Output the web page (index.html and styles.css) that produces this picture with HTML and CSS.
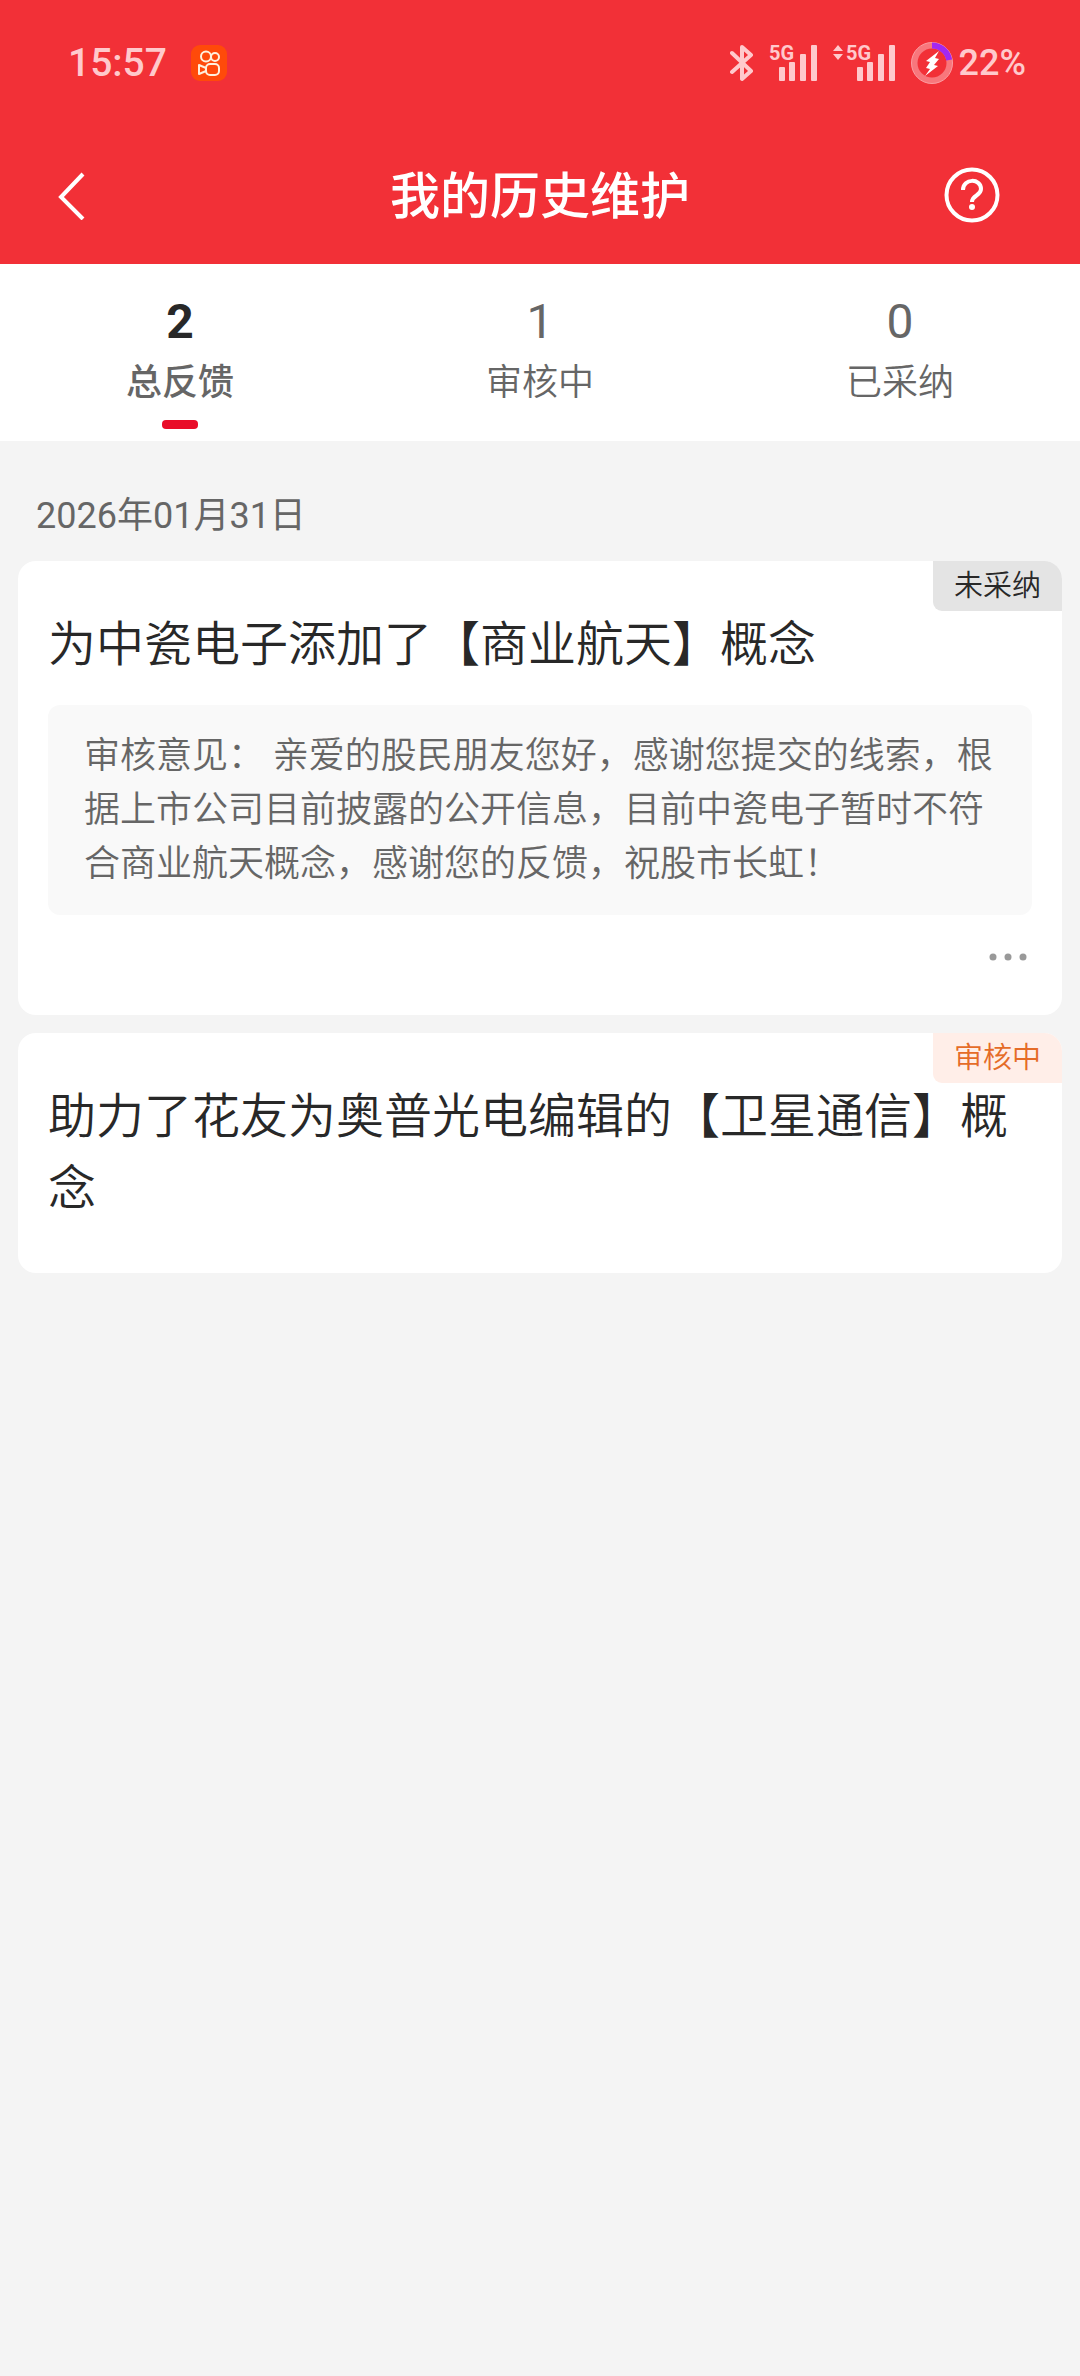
FILE: index.html
```html
<!DOCTYPE html>
<html lang="zh-CN">
<head>
<meta charset="utf-8">
<meta name="viewport" content="width=device-width, initial-scale=1">
<title>我的历史维护</title>
<link rel="stylesheet" href="styles.css">
</head>
<body>
<header class="header">
  <div class="status">
    <div class="status-left">
      <span class="time">15:57</span>
      <svg class="app-icon" width="36" height="36" viewBox="0 0 36 36" aria-hidden="true">
        <rect width="36" height="36" rx="9" fill="#ff4a0a"/>
        <g fill="none" stroke="#fff0dc" stroke-width="2" stroke-linejoin="round">
          <circle cx="15" cy="11.500" r="5"/>
          <circle cx="24" cy="12" r="4"/>
          <rect x="15" y="19" width="13" height="11" rx="4"/>
          <path d="M15 23 8 20v9l7-3"/>
        </g>
      </svg>
    </div>
    <div class="status-right">
      <svg width="24" height="38" viewBox="0 0 24 38" fill="none" stroke="currentColor" stroke-width="4" stroke-linejoin="round" stroke-linecap="round" aria-hidden="true">
        <path d="M2 9 21 27 12 35V3l9 8L2 28"/>
      </svg>
      <svg class="signal" width="49" height="54" viewBox="0 -8 49 54" fill="currentColor" role="img" aria-label="5G">
        <text class="net" x="0" y="16">5G</text>
        <rect x="10" y="23" width="6" height="14" rx="1"/><rect x="20" y="18" width="6" height="19" rx="1"/><rect x="31" y="10" width="6" height="27" rx="1"/><rect x="42" y="1" width="6" height="36" rx="1"/>
      </svg>
      <svg class="signal" width="63" height="54" viewBox="0 -8 63 54" fill="currentColor" role="img" aria-label="5G">
        <path d="M0 7 5 1l5 6zM0 10h10l-5 6z"/>
        <text class="net" x="13" y="16">5G</text>
        <rect x="24" y="23" width="6" height="14" rx="1"/><rect x="34" y="18" width="6" height="19" rx="1"/><rect x="45" y="10" width="6" height="27" rx="1"/><rect x="56" y="1" width="6" height="36" rx="1"/>
      </svg>
      <span class="battery">
        <svg width="42" height="42" viewBox="0 0 42 42" aria-hidden="true">
          <circle cx="21" cy="21" r="17.500" fill="none" stroke="#f8777c" stroke-width="6"/>
          <circle cx="21" cy="21" r="20.500" fill="none" stroke="#fb9da1" stroke-width="1"/>
          <path d="M21 3.500A17.500 17.500 0 0 1 38.200 18" fill="none" stroke="#a228f2" stroke-width="6"/>
          <path d="M28 9 15 19l4 1-4 6 4 1-5 7 13-10-4-1 5-6-4-1z" fill="#fff"/>
        </svg>
        <span class="percent">22%</span>
      </span>
    </div>
  </div>
  <div class="nav">
    <button class="icon-button" type="button" aria-label="返回">
      <svg width="28" height="50" viewBox="0 0 28 50" fill="none" stroke="#fff" stroke-width="4" aria-hidden="true"><path d="M25 4 3 27l22 22"/></svg>
    </button>
    <h1 class="title">我的历史维护</h1>
    <button class="icon-button help" type="button" aria-label="帮助">
      <svg width="56" height="56" viewBox="0 0 56 56" fill="none" stroke="#fff" stroke-width="4" aria-hidden="true">
        <circle cx="28" cy="28" r="25.500"/>
        <path d="M19 23c0-12 18-12 18-1 0 7-9 6-9 13"/>
        <circle cx="28" cy="40" r="3" fill="#fff" stroke="none"/>
      </svg>
    </button>
  </div>
</header>

<div class="tabs" role="tablist">
  <button class="tab active" type="button" role="tab" aria-selected="true"><span class="count">2</span><span class="label">总反馈</span></button>
  <button class="tab" type="button" role="tab" aria-selected="false"><span class="count">1</span><span class="label">审核中</span></button>
  <button class="tab" type="button" role="tab" aria-selected="false"><span class="count">0</span><span class="label">已采纳</span></button>
</div>

<main class="list">
  <h2 class="date">2026年01月31日</h2>
  <article class="card">
    <span class="tag">未采纳</span>
    <h3 class="card-title">为中瓷电子添加了【商业航天】概念</h3>
    <p class="review">审核意见： 亲爱的股民朋友您好，感谢您提交的线索，根据上市公司目前披露的公开信息，目前中瓷电子暂时不符合商业航天概念，感谢您的反馈，祝股市长虹！</p>
    <div class="card-footer">
      <button class="icon-button" type="button" aria-label="更多">
        <svg width="48" height="20" viewBox="0 0 48 20" fill="#999" aria-hidden="true"><circle cx="9" cy="10" r="3.500"/><circle cx="24" cy="10" r="3.500"/><circle cx="39" cy="10" r="3.500"/></svg>
      </button>
    </div>
  </article>
  <article class="card">
    <span class="tag pending">审核中</span>
    <h3 class="card-title">助力了花友为奥普光电编辑的【卫星通信】概念</h3>
  </article>
</main>
</body>
</html>
```

FILE: styles.css
```css
* {
  box-sizing: border-box;
}

body {
  margin: 0;
  min-height: 100vh;
  background: #f4f4f4;
  color: #282828;
  font-family: Roboto, "Noto Sans CJK SC", sans-serif;
}

h1, h2, h3, p {
  margin: 0;
  font-weight: 400;
}

button {
  padding: 0;
  border: 0;
  background: none;
  color: inherit;
  font: inherit;
}

svg {
  display: block;
  flex: none;
}

.header {
  background: #f23037;
  color: #fff;
}

.status {
  display: flex;
  justify-content: space-between;
  align-items: center;
  height: 126px;
  padding: 0 54px 0 68px;
  color: #ffc9cc;
}

.status-left {
  display: flex;
  align-items: center;
  gap: 24px;
}

.status-right {
  display: flex;
  align-items: center;
  gap: 15px;
}

.time {
  font-size: 39px;
  font-weight: 500;
}

.net {
  font-size: 20px;
  font-weight: 700;
}

.battery {
  display: flex;
  align-items: center;
  gap: 6px;
}

.percent {
  font-size: 36px;
  font-weight: 500;
}

.nav {
  display: grid;
  grid-template-columns: 1fr auto 1fr;
  align-items: center;
  height: 138px;
  padding: 0 58px;
}

.icon-button {
  justify-self: start;
}

.help {
  justify-self: end;
  padding-right: 22px;
}

.title {
  padding-top: 4px;
  font-size: 50px;
  font-weight: 500;
  line-height: 72px;
}

.tabs {
  display: grid;
  grid-template-columns: repeat(3, 1fr);
  background: #fff;
}

.tab {
  display: flex;
  flex-direction: column;
  align-items: center;
  padding: 30px 0 12px;
  color: #666;
}

.tab::after {
  content: "";
  width: 36px;
  height: 9px;
  margin-top: 10px;
  border-radius: 4px;
}

.tab.active::after {
  background: #e90c28;
}

.count {
  font-size: 48px;
  line-height: 56px;
}

.label {
  margin-top: 6px;
  font-size: 36px;
  font-weight: 350;
  line-height: 54px;
}

.active .count {
  color: #282828;
  font-weight: 700;
}

.active .label {
  font-weight: 500;
}

.list {
  display: flex;
  flex-direction: column;
  gap: 18px;
  padding: 48px 18px;
}

.date {
  padding-left: 18px;
  color: #666;
  font-size: 36px;
  line-height: 54px;
}

.card {
  position: relative;
  padding: 48px 30px;
  border-radius: 18px;
  background: #fff;
}

.tag {
  position: absolute;
  top: 0;
  right: 0;
  padding: 0 21px;
  border-radius: 0 18px 0 9px;
  background: #e4e4e4;
  font-size: 29px;
  font-weight: 350;
  line-height: 50px;
}

.tag.pending {
  background: #ffeee8;
  color: #e56c28;
}

.card-title {
  font-size: 48px;
  font-weight: 350;
  line-height: 72px;
}

.review {
  margin-top: 24px;
  padding: 24px 36px;
  border-radius: 12px;
  background: #f9f9f9;
  color: #666;
  font-size: 36px;
  font-weight: 350;
  line-height: 54px;
}

.card-footer {
  display: flex;
  justify-content: flex-end;
  padding-top: 32px;
}
```
